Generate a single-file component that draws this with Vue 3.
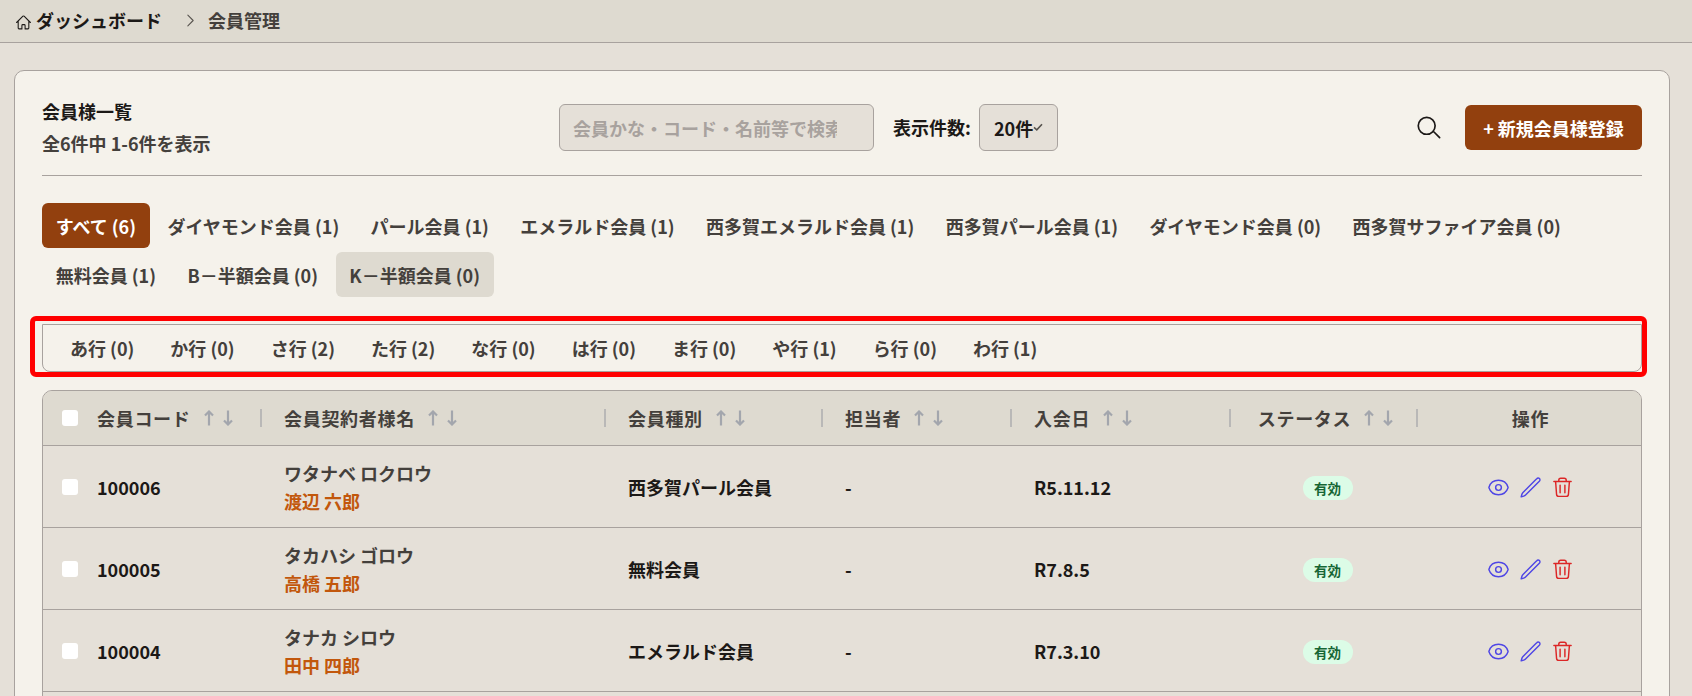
<script setup>
const filters = [
  { label: 'すべて (6)', active: true },
  { label: 'ダイヤモンド会員 (1)' },
  { label: 'パール会員 (1)' },
  { label: 'エメラルド会員 (1)' },
  { label: '西多賀エメラルド会員 (1)' },
  { label: '西多賀パール会員 (1)' },
  { label: 'ダイヤモンド会員 (0)' },
  { label: '西多賀サファイア会員 (0)' },
  { label: '無料会員 (1)' },
  { label: 'B－半額会員 (0)' },
  { label: 'K－半額会員 (0)', hover: true }
]
const kana = ['あ行 (0)', 'か行 (0)', 'さ行 (2)', 'た行 (2)', 'な行 (0)', 'は行 (0)', 'ま行 (0)', 'や行 (1)', 'ら行 (0)', 'わ行 (1)']
const columns = [
  { label: '会員コード', sort: true },
  { label: '会員契約者様名', sort: true, sep: true },
  { label: '会員種別', sort: true, sep: true },
  { label: '担当者', sort: true, sep: true },
  { label: '入会日', sort: true, sep: true },
  { label: 'ステータス', sort: true, sep: true, center: true },
  { label: '操作', sep: true, center: true, ops: true }
]
const rows = [
  { code: '100006', kana: 'ワタナベ ロクロウ', name: '渡辺 六郎', kind: '西多賀パール会員', date: 'R5.11.12' },
  { code: '100005', kana: 'タカハシ ゴロウ', name: '高橋 五郎', kind: '無料会員', date: 'R7.8.5' },
  { code: '100004', kana: 'タナカ シロウ', name: '田中 四郎', kind: 'エメラルド会員', date: 'R7.3.10' }
]
</script>

<template>
  <div class="page">
    <nav class="crumbs">
      <svg class="home" viewBox="0 0 24 24" fill="none" stroke="currentColor" stroke-width="1.5" stroke-linecap="round" stroke-linejoin="round">
        <path d="M2.25 12l8.95-8.96a1.13 1.13 0 0 1 1.6 0L21.75 12M4.5 9.75v10.13c0 .62.5 1.12 1.13 1.12H9.75v-4.88c0-.62.5-1.12 1.13-1.12h2.25c.62 0 1.12.5 1.12 1.12V21h4.13c.62 0 1.12-.5 1.12-1.12V9.75" />
      </svg>
      <span class="crumb-root">ダッシュボード</span>
      <svg class="chev" viewBox="0 0 24 24" fill="none" stroke="currentColor" stroke-width="1.5" stroke-linecap="round" stroke-linejoin="round">
        <path d="M8.25 4.5l7.5 7.5-7.5 7.5" />
      </svg>
      <span class="crumb-here">会員管理</span>
    </nav>

    <main class="card">
      <header class="toolbar">
        <div class="heading">
          <h1>会員様一覧</h1>
          <p>全6件中 1-6件を表示</p>
        </div>
        <input class="search" type="text" placeholder="会員かな・コード・名前等で検索" />
        <label class="count-label">表示件数:</label>
        <div class="select">
          <span>20件</span>
          <svg class="select-check" viewBox="0 0 12 10" fill="none" stroke="currentColor" stroke-width="2">
            <path d="M1 5.5l3.5 3L11 1.5" />
          </svg>
        </div>
        <svg class="search-icon" viewBox="0 0 24 24" fill="none" stroke="currentColor" stroke-width="1.5" stroke-linecap="round" stroke-linejoin="round">
          <path d="M21 21l-5.2-5.2M17 10.5a7.5 7.5 0 1 1-15 0 7.5 7.5 0 0 1 15 0z" />
        </svg>
        <button class="new-btn" type="button">+ 新規会員様登録</button>
      </header>

      <div class="filters">
        <button v-for="f in filters" :key="f.label" type="button" class="chip" :class="{ active: f.active, hover: f.hover }">{{ f.label }}</button>
      </div>

      <div class="kana-wrap">
        <div class="kana">
          <button v-for="k in kana" :key="k" type="button" class="kana-item">{{ k }}</button>
        </div>
        <div class="highlight"></div>
      </div>

      <section class="table">
        <div class="row head">
          <div class="cell"><span class="box"></span></div>
          <div v-for="c in columns" :key="c.label" class="cell th" :class="{ sep: c.sep, center: c.center, status: c.sort && c.center, ops: c.ops }">
            <span class="th-label">{{ c.label }}</span>
            <span v-if="c.sort" class="arrows">
              <svg viewBox="0 0 10 16" fill="none" stroke="currentColor" stroke-width="2.2"><path d="M5 15.5V1.5M1 5.5l4-4 4 4" /></svg>
              <svg viewBox="0 0 10 16" fill="none" stroke="currentColor" stroke-width="2.2"><path d="M5 .5v14M1 10.5l4 4 4-4" /></svg>
            </span>
          </div>
        </div>
        <div v-for="r in rows" :key="r.code" class="row body">
          <div class="cell"><span class="box"></span></div>
          <div class="cell code">{{ r.code }}</div>
          <div class="cell stack">
            <span class="kana-name">{{ r.kana }}</span>
            <span class="real-name">{{ r.name }}</span>
          </div>
          <div class="cell strong">{{ r.kind }}</div>
          <div class="cell strong">-</div>
          <div class="cell strong">{{ r.date }}</div>
          <div class="cell center status"><span class="badge">有効</span></div>
          <div class="cell center ops actions">
            <svg class="act view" viewBox="0 0 24 24" fill="none" stroke="currentColor" stroke-width="1.5" stroke-linecap="round" stroke-linejoin="round">
              <path d="M2.04 12.32a1 1 0 0 1 0-.64C3.42 7.51 7.36 4.5 12 4.5s8.57 3.01 9.96 7.18a1 1 0 0 1 0 .64C20.58 16.49 16.64 19.5 12 19.5s-8.57-3.01-9.96-7.18z" />
              <path d="M15 12a3 3 0 1 1-6 0 3 3 0 0 1 6 0z" />
            </svg>
            <svg class="act edit" viewBox="0 0 24 24" fill="none" stroke="currentColor" stroke-width="1.5" stroke-linecap="round" stroke-linejoin="round">
              <path d="M16.86 4.49l1.69-1.69a1.88 1.88 0 1 1 2.65 2.65L6.83 19.82a4.5 4.5 0 0 1-1.9 1.13L2.25 21.75l.8-2.68a4.5 4.5 0 0 1 1.13-1.9L16.86 4.49z" />
            </svg>
            <svg class="act trash" viewBox="0 0 24 24" fill="none" stroke="currentColor" stroke-width="1.5" stroke-linecap="round" stroke-linejoin="round">
              <path d="M9.5 9.5v8M14.5 9.5v8M19.2 5.8l-1 13.4a2.25 2.25 0 0 1-2.24 2.05H8.04a2.25 2.25 0 0 1-2.24-2.05l-1-13.4M3 5.8h18M15.9 5.5V4.6c0-1.18-.92-2.17-2.1-2.2a52 52 0 0 0-3.6 0c-1.18.03-2.1 1.02-2.1 2.2v.9" />
            </svg>
          </div>
        </div>
        <div class="row body"></div>
      </section>
    </main>
  </div>
</template>

<style>
html, body {
  margin: 0;
  background: #e5e0d8;
  overflow: hidden;
}
</style>

<style scoped>
.page {
  height: 696px;
  overflow: hidden;
  background: #e5e0d8;
  color: #44403c;
  font-family: "Noto Sans CJK JP", "Noto Sans", sans-serif;
  font-size: 18px;
  font-weight: 600;
}
.crumbs {
  display: flex;
  align-items: center;
  padding: 0 0 2px 15px;
  height: 40px;
  background: #dedad0;
  border-bottom: 1px solid #a8a29e;
}
.home { width: 17px; height: 17px; color: #1c1917; margin-right: 4px; margin-top: 5px; }
.crumb-root { color: #1c1917; font-weight: 700; }
.chev { width: 17px; height: 17px; margin: 0 9px 0 20px; color: #57534e; }
.crumb-here { color: #44403c; }

.card {
  margin: 27px 22px 0 14px;
  padding: 33px 27px 0;
  background: #f5f2eb;
  border: 1px solid #a8a29e;
  border-radius: 10px;
}
.toolbar {
  height: 71px;
  display: flex;
  align-items: flex-start;
  border-bottom: 1px solid #a8a29e;
}
.heading { width: 517px; }
.heading h1 { margin: -4px 0 0; font-size: 18px; line-height: 21px; font-weight: 700; color: #1c1917; padding-top: 1px; }
.heading p { margin: 10px 0 0; font-size: 18px; line-height: 22px; color: #44403c; }
.search {
  width: 315px;
  height: 47px;
  box-sizing: border-box;
  padding: 0 36px 0 13px;
  background: #e5e0d8;
  border: 1px solid #a8a29e;
  border-radius: 6px;
  font: inherit;
  color: #44403c;
  outline: none;
}
.search::placeholder { color: #a8a29e; opacity: 1; }
.count-label { margin-left: 19px; line-height: 47px; color: #1c1917; width: 86px; white-space: nowrap; }
.select {
  width: 79px;
  height: 47px;
  box-sizing: border-box;
  border: 1px solid #a8a29e;
  border-radius: 6px;
  background: #e5e0d8;
  padding-left: 14px;
  display: flex;
  align-items: center;
  color: #1c1917;
  position: relative;
}
.select-check { position: absolute; left: 53px; top: 18px; width: 10px; height: 8px; color: #57534e; }
.search-icon { width: 27px; height: 27px; margin-left: 358px; margin-top: 10px; color: #1c1917; }
.new-btn {
  margin-left: 22px;
  width: 177px;
  height: 45px;
  margin-top: 1px;
  border: 0;
  border-radius: 6px;
  background: #92400e;
  color: #fff;
  font: inherit;
  font-weight: 700;
  padding: 0;
}

.filters {
  display: flex;
  flex-wrap: wrap;
  gap: 4px;
  margin-top: 27px;
}
.chip {
  height: 45px;
  padding: 0 13.7px;
  border: 0;
  border-radius: 6px;
  background: transparent;
  font: inherit;
  color: #44403c;
}
.chip.active { background: #92400e; color: #fff; font-weight: 700; }
.chip.hover { background: #dedad0; }

.kana-wrap { position: relative; margin-top: 27px; }
.kana {
  height: 48px;
  box-sizing: border-box;
  display: flex;
  gap: 8px;
  padding-left: 13px;
  border: 1px solid #a8a29e;
  border-radius: 0 0 8px 8px;
}
.kana-item {
  padding: 0 14px;
  border: 0;
  background: transparent;
  font: inherit;
  color: #44403c;
}
.highlight {
  position: absolute;
  left: -12px;
  right: -5px;
  top: -8px;
  bottom: -5px;
  border: 5px solid #f00;
  border-radius: 6px;
  pointer-events: none;
}

.table {
  margin-top: 18px;
  background: #e5e0d8;
  border: 1px solid #a8a29e;
  border-radius: 10px 10px 0 0;
  overflow: hidden;
}
.row {
  display: grid;
  grid-template-columns: 54px 163px 344px 217px 189px 219px 187px 225px;
  border-bottom: 1px solid #a8a29e;
}
.row.head { height: 54px; background: #dedad0; }
.row.body { height: 81px; }
.cell { display: flex; align-items: center; position: relative; min-width: 0; }
.cell.th { padding-left: 24px; color: #44403c; }
.cell.center { justify-content: center; padding-left: 0; }
.cell.status { padding-left: 10px; }
.row.head .cell.status { padding-left: 7px; }
.cell.ops { padding-left: 4px; }
.th-label { letter-spacing: 0.7px; }
.cell.sep::before {
  content: "";
  position: absolute;
  left: 0;
  top: 18px;
  height: 18px;
  width: 2px;
  background: #b9b8b7;
}
.row.head > .cell:nth-child(2),
.row.body > .cell:nth-child(2) { padding-left: 0; }
.row.body > .cell:nth-child(n+3):not(.center) { padding-left: 24px; }
.box {
  width: 16px;
  height: 16px;
  margin-left: 19px;
  border-radius: 3px;
  background: #fff;
}
.arrows { display: inline-flex; gap: 7px; margin-left: 12px; color: #a3a6ad; }
.arrows svg { width: 12px; height: 16px; }
.code { color: #1c1917; }
.stack { flex-direction: column; align-items: flex-start; justify-content: center; }
.kana-name { line-height: 28px; color: #44403c; }
.real-name { line-height: 28px; color: #c2570c; }
.strong { color: #1c1917; }
.badge {
  width: 50px;
  height: 24px;
  margin-top: 2px;
  border-radius: 12px;
  background: #dcfce7;
  color: #166534;
  font-size: 13.5px;
  line-height: 24px;
  text-align: center;
}
.actions { gap: 9px; }
.act { width: 23px; height: 23px; margin-top: 2px; }
.view, .edit { color: #4f46e5; }
.trash { color: #dc2626; }
</style>
